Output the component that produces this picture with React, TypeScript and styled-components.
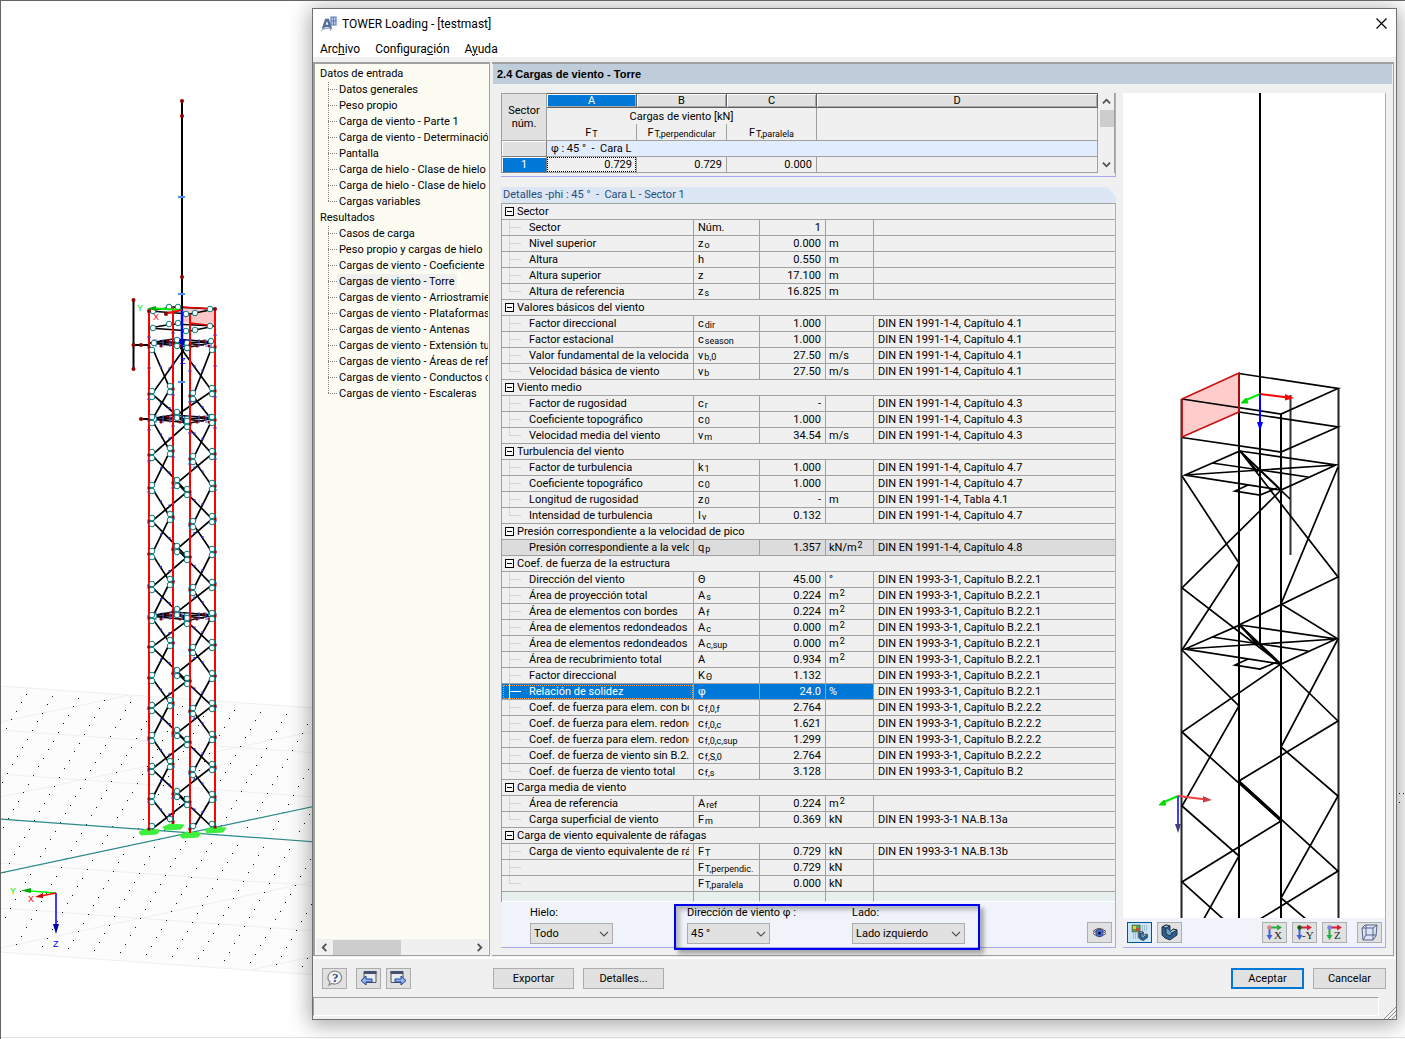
import React from "react";
import styled, { createGlobalStyle, css } from "styled-components";

const UI = `Roboto, "Noto Sans", sans-serif`;
const GRID = `Roboto, "Liberation Sans", sans-serif`;
const LINE = "#a0a0a0";
const LILAC = "#a8a8ee";
const BLUE = "#0078d7";

const GlobalStyle = createGlobalStyle`
  *, *::before, *::after { box-sizing: border-box; }
  body { margin: 0; background: #fff; font: 11px/16px ${UI}; color: #000; }
  button, select { font: inherit; color: inherit; margin: 0; }
`;

/* ---------- desktop and window frame ---------- */

const Desktop = styled.div`
  position: relative;
  min-height: 100vh;
  padding: 8px 8px 19px 312px;
  overflow: hidden;
  border-top: 1px solid #666;
  border-left: 1px solid #666;
`;

const Scene = styled.svg`
  position: absolute;
  left: -1px;
  top: -1px;
`;

const AppWindow = styled.main`
  position: relative;
  display: flex;
  flex-direction: column;
  margin: -1px 0 0 -1px;
  background: #f0f0f0;
  border: 1px solid #707070;
  box-shadow: 0 3px 20px 2px rgba(0, 0, 0, 0.35);
`;

const TitleBar = styled.header`
  display: flex;
  align-items: center;
  gap: 5px;
  height: 29px;
  padding: 0 8px;
  background: #fff;
`;

const Title = styled.h1`
  flex: 1;
  margin: 0;
  font: 12px/16px ${UI};
`;

const CloseButton = styled.button`
  display: flex;
  padding: 0;
  border: 0;
  background: none;
`;

const MenuBar = styled.nav`
  display: flex;
  gap: 15px;
  height: 19px;
  padding: 2px 7px 0;
  background: #fff;
  font-size: 12px;
`;

const MenuItem = styled.button`
  padding: 0;
  border: 0;
  background: none;
  line-height: 16px;
`;

const Body = styled.div`
  display: grid;
  grid-template-columns: 177px minmax(0, 1fr);
  gap: 2px;
  margin-top: 5px;
`;

/* ---------- navigator ---------- */

const Navigator = styled.nav`
  display: flex;
  flex-direction: column;
  min-width: 0;
  padding: 2px 1px 0 1px;
  background: #fcfcf3;
  border: solid ${LINE};
  border-width: 2px 1px 1px 2px;
  font-size: 11px;
`;

const TreeList = styled.ul`
  flex: 1;
  margin: 0;
  padding: 0;
  list-style: none;
  overflow: hidden;
  white-space: nowrap;
`;

const TreeSection = styled.li`
  padding-left: 4px;
  ul { flex: none; overflow: visible; padding-left: 8px; }
`;

const TreeItem = styled.li<{ $last?: boolean; $active?: boolean }>`
  display: flex;
  align-items: center;
  height: 16px;
  &::before {
    content: "";
    flex: none;
    align-self: flex-start;
    width: 9px;
    height: ${(p) => (p.$last ? 8 : 16)}px;
    background:
      repeating-linear-gradient(to bottom, #808080 0 1px, transparent 1px 2px) left / 1px 100% no-repeat,
      repeating-linear-gradient(to right, #808080 0 1px, transparent 1px 2px) 0 7px / 9px 1px no-repeat;
  }
  a {
    padding: 0 2px;
    color: inherit;
    text-decoration: none;
    line-height: 16px;
    background: ${(p) => (p.$active ? "#f0f0f0" : "none")};
  }
`;

const HScroll = styled.div`
  display: flex;
  align-items: center;
  height: 16px;
  background: #f0f0f0;
  padding: 0 4px;
`;

const HThumb = styled.div`
  width: 68px;
  height: 15px;
  margin: 0 auto 0 4px;
  background: #cdcdcd;
`;

/* ---------- content ---------- */

const Panel = styled.section`
  display: flex;
  flex-direction: column;
  min-width: 0;
  border: solid ${LINE};
  border-width: 2px 1px 1px 0;
  margin-right: 2px;
  padding-left: 1px;
`;

const PanelTitle = styled.h2`
  margin: 0 1px 0 0;
  padding: 0 4px;
  height: 20px;
  background: #bfccd9;
  font: bold 11px/20px "Liberation Sans", sans-serif;
`;

const Columns = styled.div`
  display: grid;
  grid-template-columns: minmax(0, 1fr) 263px;
  gap: 7px;
  padding: 9px 7px 7px 8px;
`;

const Left = styled.div`
  display: flex;
  flex-direction: column;
  min-width: 0;
  gap: 10px;
`;

const LoadsBox = styled.div`
  display: flex;
  gap: 1px;
  padding-bottom: 3px;
  border: solid ${LILAC};
  border-width: 0 1px 1px 0;
`;

const LoadsTable = styled.table`
  flex: 1;
  table-layout: fixed;
  border-collapse: separate;
  border-spacing: 0;
  border-left: 1px solid ${LINE};
  font: 11px/15px ${GRID};
  th, td { padding: 0; font-weight: normal; overflow: hidden; white-space: nowrap; }
`;

const Letter = styled.th<{ $active?: boolean }>`
  height: 15px;
  line-height: 12px;
  border: solid #606060;
  border-width: 1px 1px 1px 0;
  background: ${(p) => (p.$active ? BLUE : "#e1e1e1")};
  color: ${(p) => (p.$active ? "#fff" : "#000")};
  box-shadow: inset 1px 1px #fff, inset -1px -1px #a8a8a8;
`;

const Corner = styled.th`
  background: #e1e1e1;
  line-height: 13px;
  border: solid ${LINE};
  border-width: 1px 1px 1px 0;
`;

const HeadCell = styled.th<{ $top?: boolean }>`
  height: ${(p) => (p.$top ? 16 : 17)}px;
  border-right: 1px solid ${LINE};
  border-bottom: ${(p) => (p.$top ? "0" : `1px solid ${LINE}`)};
`;

const RowHead = styled.th<{ $active?: boolean }>`
  height: 16px;
  background: ${(p) => (p.$active ? BLUE : "#e1e1e1")};
  color: #fff;
  box-shadow: inset 1px 1px #fff;
  border: solid #808080;
  border-width: 0 1px 1px 0;
`;

const DirectionCell = styled.td`
  height: 16px;
  background: #e1edff;
  text-indent: 4px;
  border: solid ${LINE};
  border-width: 0 1px 1px 0;
`;

const LoadCell = styled.td<{ $focus?: boolean }>`
  height: 16px;
  text-align: right;
  border: solid ${LINE};
  border-width: 0 1px 1px 0;
  span { display: block; padding-right: 4px; line-height: 15px; }
  ${(p) => p.$focus && css`span { padding-right: 3px; line-height: 13px; border: 1px dotted #000; }`}
`;

const VScroll = styled.div`
  display: flex;
  flex-direction: column;
  align-items: center;
  width: 16px;
  padding: 4px 0;
  border-right: 1px solid ${LINE};
`;

const VThumb = styled.div`
  width: 14px;
  height: 17px;
  margin: 4px 0 auto;
  background: #cdcdcd;
`;

const DetailsTitle = styled.h3`
  margin: 0;
  height: 16px;
  padding-left: 2px;
  background: #dce6f4;
  clip-path: polygon(0 0, calc(100% - 8px) 0, 100% 10px, 100% 100%, 0 100%);
  color: #1f4e79;
  font: 11px/16px ${GRID};
  white-space: pre;
`;

const DetailsFrame = styled.div`
  border-right: 1px solid ${LILAC};
`;

const DetailsTable = styled.table`
  width: 100%;
  table-layout: fixed;
  border-collapse: separate;
  border-spacing: 0;
  border: solid ${LINE};
  border-width: 1px 0 0 1px;
  font: 11px/15px ${GRID};
`;

const Cell = styled.td<{ $align?: string; $tone?: string }>`
  height: 16px;
  padding: 0 4px;
  overflow: hidden;
  white-space: nowrap;
  text-align: ${(p) => p.$align ?? "left"};
  border: solid ${LINE};
  border-width: 0 1px 1px 0;
  &:nth-child(4) { padding-left: 3px; }
  &:last-child { border-right: 0; }
  ${(p) => p.$tone === "selected" && css`&:not(:last-child) { background: ${BLUE}; color: #fff; }`}
  ${(p) => p.$tone === "marked" && css`background: #dcdcdc;`}
`;

const NameCell = styled(Cell)`
  padding-left: 0;
  ${(p) => p.$tone === "selected" && css`outline: 1px dotted #f0a050; outline-offset: -2px;`}
`;

const Name = styled.div`
  display: flex;
  height: 15px;
  padding-left: 7px;
  overflow: hidden;
`;

const Branch = styled.i<{ $last?: boolean; $hidden?: boolean; $tone?: string }>`
  flex: none;
  width: 12px;
  margin-right: 8px;
  --c: ${(p) => (p.$tone === "selected" ? "#fff" : "#d4d4d4")};
  background:
    linear-gradient(var(--c), var(--c)) 0 0 / 1px ${(p) => (p.$last ? "8px" : "100%")} no-repeat,
    linear-gradient(var(--c), var(--c)) 0 7px / 100% 1px no-repeat;
  visibility: ${(p) => (p.$hidden ? "hidden" : "visible")};
`;

const GroupCell = styled.th`
  height: 16px;
  padding: 0 0 0 3px;
  border-bottom: 1px solid ${LINE};
  font-weight: normal;
  text-align: left;
  div { display: flex; align-items: center; gap: 3px; height: 15px; }
`;

const Toggle = styled.button`
  width: 9px;
  height: 9px;
  padding: 0;
  border: 1px solid #000;
  border-radius: 0;
  background: linear-gradient(#000, #000) center / 5px 1px no-repeat #fff;
`;

const EmptyCell = styled(Cell)`
  height: 10px;
  border-bottom-color: #fff;
  background: #e8efef;
`;

const Sub = styled.sub`
  margin-left: 1px;
  font-size: 9px;
  line-height: 0;
  vertical-align: -1px;
`;

const Sup = styled.sup`
  margin-left: 1px;
  font-size: 9px;
  line-height: 0;
  vertical-align: 3px;
`;

const FilterBar = styled.div`
  display: flex;
  align-items: flex-start;
  height: 46px;
  padding: 3px 3px 0 29px;
  background: #f0f4fa;
  border-bottom: 1px solid ${LILAC};
`;

const Field = styled.div<{ $width: number }>`
  display: flex;
  flex-direction: column;
  gap: 2px;
  width: ${(p) => p.$width}px;
  white-space: nowrap;
  label { line-height: 16px; }
`;

const SelectBox = styled.div`
  display: grid;
  align-items: center;
  > * { grid-area: 1 / 1; }
  svg { justify-self: end; margin-right: 4px; pointer-events: none; }
`;

const Select = styled.select`
  appearance: none;
  width: 100%;
  height: 21px;
  padding: 0 3px;
  border: 1px solid #adadad;
  border-radius: 0;
  background: #e1e1e1;
`;

const WindGroup = styled.div`
  position: relative;
  display: flex;
  gap: 82px;
  margin-left: 74px;
`;

const Highlight = styled.div`
  position: absolute;
  inset: -1px -15px -6px -13px;
  border: 2px solid #0000f0;
  box-shadow: 4px 4px 4px rgba(0, 0, 0, 0.3), inset 4px 4px 4px rgba(0, 0, 0, 0.25);
  pointer-events: none;
`;

const IconButton = styled.button<{ $active?: boolean }>`
  display: flex;
  flex: none;
  align-items: center;
  justify-content: center;
  width: 25px;
  height: 21px;
  padding: 0;
  border: 1px solid ${(p) => (p.$active ? "#005499" : "#adadad")};
  background: ${(p) => (p.$active ? "#cce4f7" : "#e1e1e1")};
`;

const LoweredButton = styled(IconButton)`
  margin-top: 17px;
`;

const ViewGroup = styled.div`
  display: flex;
  gap: 5px;
  margin-right: 5px;
`;

const Spacer = styled.div`
  flex: 1;
`;

/* ---------- preview ---------- */

const Preview = styled.div`
  display: flex;
  flex-direction: column;
  border-right: 1px solid ${LILAC};
`;

const PreviewCanvas = styled.div`
  flex: 1;
  min-height: 0;
  background: #fff;
  svg { display: block; width: 100%; height: 100%; }
`;

const PreviewBar = styled.div`
  display: flex;
  gap: 5px;
  height: 30px;
  padding: 4px 3px 0 4px;
  background: #f0f4fa;
  border-bottom: 1px solid ${LILAC};
`;

/* ---------- footer ---------- */

const Footer = styled.footer`
  display: flex;
  gap: 9px;
  height: 40px;
  padding: 9px 10px 0 9px;
  border-top: 2px solid #fff;
  margin-top: 1px;
`;

const IconGroup = styled.div`
  display: flex;
  gap: 5px;
  margin-right: 73px;
`;

const PushButton = styled.button<{ $wide?: boolean; $primary?: boolean }>`
  width: ${(p) => (p.$wide ? 81 : 73)}px;
  height: 21px;
  padding: 0;
  border: ${(p) => (p.$primary ? `2px solid ${BLUE}` : "1px solid #adadad")};
  background: #e1e1e1;
`;

const StatusBar = styled.div`
  display: flex;
  align-items: flex-end;
  justify-content: space-between;
  height: 22px;
`;

const StatusField = styled.div`
  flex: 1;
  align-self: flex-start;
  height: 19px;
  margin-right: 5px;
  border: solid;
  border-color: ${LINE} #fff #fff ${LINE};
  border-width: 1px;
`;

/* ---------- data ---------- */

const tree = [
  { label: "Datos de entrada", items: ["Datos generales", "Peso propio", "Carga de viento - Parte 1", "Carga de viento - Determinación", "Pantalla", "Carga de hielo - Clase de hielo G", "Carga de hielo - Clase de hielo R", "Cargas variables"] },
  { label: "Resultados", items: ["Casos de carga", "Peso propio y cargas de hielo", "Cargas de viento - Coeficiente", "Cargas de viento - Torre", "Cargas de viento - Arriostramiento", "Cargas de viento - Plataformas", "Cargas de viento - Antenas", "Cargas de viento - Extensión tubular", "Cargas de viento - Áreas de referencia", "Cargas de viento - Conductos de", "Cargas de viento - Escaleras"] },
];

/* name, symbol (base_sub), value, unit (base^sup), reference, tone */
type Row = [string, string, string, string, string, string?];

const C = "DIN EN 1991-1-4, Capítulo ";
const B = "DIN EN 1993-3-1, Capítulo B.2";

const groups: { title: string; rows: Row[] }[] = [
  { title: "Sector", rows: [
    ["Sector", "Núm.", "1", "", ""],
    ["Nivel superior", "z_o", "0.000", "m", ""],
    ["Altura", "h", "0.550", "m", ""],
    ["Altura superior", "z", "17.100", "m", ""],
    ["Altura de referencia", "z_s", "16.825", "m", ""],
  ] },
  { title: "Valores básicos del viento", rows: [
    ["Factor direccional", "c_dir", "1.000", "", C + "4.1"],
    ["Factor estacional", "c_season", "1.000", "", C + "4.1"],
    ["Valor fundamental de la velocidad", "v_b,0", "27.50", "m/s", C + "4.1"],
    ["Velocidad básica de viento", "v_b", "27.50", "m/s", C + "4.1"],
  ] },
  { title: "Viento medio", rows: [
    ["Factor de rugosidad", "c_r", "-", "", C + "4.3"],
    ["Coeficiente topográfico", "c_0", "1.000", "", C + "4.3"],
    ["Velocidad media del viento", "v_m", "34.54", "m/s", C + "4.3"],
  ] },
  { title: "Turbulencia del viento", rows: [
    ["Factor de turbulencia", "k_1", "1.000", "", C + "4.7"],
    ["Coeficiente topográfico", "c_0", "1.000", "", C + "4.7"],
    ["Longitud de rugosidad", "z_0", "-", "m", "DIN EN 1991-1-4, Tabla 4.1"],
    ["Intensidad de turbulencia", "I_v", "0.132", "", C + "4.7"],
  ] },
  { title: "Presión correspondiente a la velocidad de pico", rows: [
    ["Presión correspondiente a la velocidad", "q_p", "1.357", "kN/m^2", C + "4.8", "marked"],
  ] },
  { title: "Coef. de fuerza de la estructura", rows: [
    ["Dirección del viento", "Θ", "45.00", "°", B + ".2.1"],
    ["Área de proyección total", "A_s", "0.224", "m^2", B + ".2.1"],
    ["Área de elementos con bordes", "A_f", "0.224", "m^2", B + ".2.1"],
    ["Área de elementos redondeados con", "A_c", "0.000", "m^2", B + ".2.1"],
    ["Área de elementos redondeados con", "A_c,sup", "0.000", "m^2", B + ".2.1"],
    ["Área de recubrimiento total", "A", "0.934", "m^2", B + ".2.1"],
    ["Factor direccional", "K_Θ", "1.132", "", B + ".2.1"],
    ["Relación de solidez", "φ", "24.0", "%", B + ".2.1", "selected"],
    ["Coef. de fuerza para elem. con bordes", "c_f,0,f", "2.764", "", B + ".2.2"],
    ["Coef. de fuerza para elem. redondeados", "c_f,0,c", "1.621", "", B + ".2.2"],
    ["Coef. de fuerza para elem. redondeados", "c_f,0,c,sup", "1.299", "", B + ".2.2"],
    ["Coef. de fuerza de viento sin B.2.2.2", "c_f,S,0", "2.764", "", B + ".2.2"],
    ["Coef. de fuerza de viento total", "c_f,s", "3.128", "", B],
  ] },
  { title: "Carga media de viento", rows: [
    ["Área de referencia", "A_ref", "0.224", "m^2", ""],
    ["Carga superficial de viento", "F_m", "0.369", "kN", "DIN EN 1993-3-1 NA.B.13a"],
  ] },
  { title: "Carga de viento equivalente de ráfagas", rows: [
    ["Carga de viento equivalente de ráfagas", "F_T", "0.729", "kN", "DIN EN 1993-3-1 NA.B.13b"],
    ["", "F_T,perpendic.", "0.729", "kN", ""],
    ["", "F_T,paralela", "0.000", "kN", ""],
  ] },
];

const Symbol = ({ text }: { text: string }) => {
  const [base, sub] = text.split("_");
  return <>{base}{sub && <Sub>{sub}</Sub>}</>;
};

const Unit = ({ text }: { text: string }) => {
  const [base, sup] = text.split("^");
  return <>{base}{sup && <Sup>{sup}</Sup>}</>;
};

/* ---------- small drawings ---------- */

const Chevron = ({ dir, size = 9, bold }: { dir: "up" | "down" | "left" | "right"; size?: number; bold?: boolean }) => {
  const d = { up: "M1 7 5 3 9 7", down: "M1 3 5 7 9 3", left: "M7 1 3 5 7 9", right: "M3 1 7 5 3 9" }[dir];
  return (
    <svg width={size} height={size} viewBox="0 0 10 10" fill="none" stroke="#505050" strokeWidth={bold ? 2 : 1.1}>
      <path d={d} />
    </svg>
  );
};

const AppIcon = () => (
  <svg width="16" height="16" viewBox="0 0 16 16" fill="none">
    <path d="M2 13 5 4h2l3 9M4 10h4" stroke="#54699c" strokeWidth="2.400" />
    <path d="M0 15l4-4M1 13l9-1M9 15l2-3" stroke="#8fa0c8" />
    <path d="M10 1h5v8h-5zM10 5h5M12.500 1v8" stroke="#5b7ab8" strokeWidth="1.200" fill="#c9d6ef" />
  </svg>
);

const EyeIcon = () => (
  <svg width="15" height="12" viewBox="0 0 15 12">
    <path d="M1 6.500Q7-.5 14 6.500 7 12 1 6.500Z" fill="#fff" stroke="#555" />
    <circle cx="7.500" cy="6" r="3.800" fill="#4a6fd0" stroke="#27408b" strokeWidth=".8" />
    <circle cx="7.500" cy="6" r="1.500" fill="#101030" />
    <path d="M1 4.500Q7-1.500 14 4.500" fill="none" stroke="#444" />
  </svg>
);

const SolidPart = ({ x = 0, y = 0, k = 1 }: { x?: number; y?: number; k?: number }) => (
  <g transform={`translate(${x} ${y}) scale(${k})`} stroke="#1c2733" strokeWidth=".9" strokeLinejoin="round">
    <path d="M1 3 5 1l4 1v6l3-3 4 1v5l-7 5-5-2-3-3Z" fill="#2f5f92" />
    <path d="M1 3l4-2 4 1-4 2ZM9 8l3-3 4 1-5 3Z" fill="#9cc6e6" />
    <path d="M5 4v6l4 2 2-3" fill="#6f9fcb" />
  </g>
);

const MixedIcon = () => (
  <svg width="17" height="17" viewBox="0 0 17 17">
    <path d="M9 2h7M9 4h7M9 6h7M2 10h6M2 12h6M2 14h6" stroke="#7b95ad" strokeDasharray="1 1" />
    <path d="M1 1h8v7H1z" fill="#5c9e50" stroke="#3b5c4a" strokeWidth=".6" />
    <path d="M2 2h3v3H2z" fill="#e8d030" />
    <path d="M5 4h3v3H5z" fill="#c05030" />
    <SolidPart x={7} y={7} k={0.6} />
  </svg>
);

const PartIcon = () => (
  <svg width="17" height="17" viewBox="0 0 17 17"><SolidPart /></svg>
);

const AxisIcon = ({ label, across, down, knob }: { label: string; across: string; down: string; knob: string }) => (
  <svg width="18" height="17" viewBox="0 0 18 17">
    <path d="M3 3.500h9" stroke={across} strokeWidth="2" />
    <path d="M11 .5l5 3-5 3Z" fill={across} />
    <path d="M3.500 3v9" stroke={down} strokeWidth="2" />
    <path d="M.5 11h6l-3 5Z" fill={down} />
    <circle cx="3.500" cy="3.500" r="2.200" fill={knob} />
    <text x={label.length > 1 ? 6 : 8} y="15" fontFamily="Liberation Serif" fontSize="11" fill="#222">{label}</text>
  </svg>
);

const CubeIcon = () => (
  <svg width="17" height="17" viewBox="0 0 17 17" fill="none" stroke="#54648c" strokeLinejoin="round">
    <path d="M1 4 4 1h12l-1 11-3 4H2Z" fill="#dbe3f2" />
    <path d="M1 4h11v12M12 4l4-3M5 1v10h10M5 11l-3 5" />
  </svg>
);

const HelpIcon = () => (
  <svg width="18" height="17" viewBox="0 0 18 17">
    <path d="M9 1a7 6.500 0 1 1-3 12.500L3 15l1-3A7 6.500 0 0 1 9 1Z" fill="#f4f4f4" stroke="#888" strokeWidth="1.200" />
    <text x="6" y="12" fontFamily="Liberation Serif" fontWeight="bold" fontSize="13" fill="#2b4a9b">?</text>
  </svg>
);

const PageIcon = ({ back }: { back?: boolean }) => (
  <svg width="17" height="17" viewBox="0 0 17 17">
    <g transform={back ? undefined : "translate(17 0) scale(-1 1)"}>
      <path d="M4 1.500h12v11H4Z" fill="#e8ebf2" stroke="#555" />
      <path d="M4 1h12.500v3H4Z" fill="#44506e" />
      <path d="M1 10.500 6 6v3h6v3H6v3Z" fill="#8fb2f0" stroke="#1c3f94" />
    </g>
  </svg>
);

/* ---------- model view behind the window ---------- */

const LEG = { A: 149, B: 173, C: 190, D: 215 } as const;
type Leg = keyof typeof LEG;

/* each face is a zigzag: alternating legs, with the height of every joint */
const faces: { legs: [Leg, Leg]; joints: [number, number]; ys: number[] }[] = [
  { legs: ["A", "B"], joints: [152, 170], ys: [347, 389, 420, 451, 488, 517, 554, 582, 618, 643, 678, 703, 738, 764, 799, 822] },
  { legs: ["C", "A"], joints: [187, 152], ys: [345, 394, 424, 455, 492, 521, 557, 587, 621, 647, 681, 708, 742, 769, 802, 829] },
  { legs: ["B", "D"], joints: [177, 212], ys: [343, 391, 415, 454, 483, 519, 549, 585, 612, 645, 673, 706, 733, 767, 794, 827] },
  { legs: ["D", "C"], joints: [212, 193], ys: [347, 396, 420, 459, 486, 524, 552, 590, 616, 650, 676, 711, 737, 772, 797, 829] },
];

const legEnds: [Leg, number, number][] = [["A", 311, 830], ["B", 307, 824], ["C", 314, 833], ["D", 309, 828]];

const groundDots = () => {
  const dots: [number, number][] = [];
  for (let i = -30; i < 40; i++)
    for (let j = -40; j < 40; j++) {
      const x = 190 + i * 26 - j * 31;
      const y = 832 + i * 2 + j * 6.6;
      if (x > 1 && x < 330 && y > 687 + x * 0.071 && y < 952 + x * 0.075) dots.push([Math.round(x), Math.round(y)]);
    }
  return dots;
};

const Platform = ({ y }: { y: number }) => (
  <g>
    <path
      d={`M149 ${y} L173 ${y - 4} L215 ${y - 1} L190 ${y + 4}Z M149 ${y} L215 ${y - 1} M173 ${y - 4} L190 ${y + 4} M160 ${y - 2} L204 ${y + 2}`}
      stroke="#000" strokeWidth="1.700" fill="none"
    />
    {[154, 161, 168, 180, 186, 197, 204, 209].map((x, i) => (
      <g key={x}>
        <circle cx={x} cy={y + (i % 2 ? 3 : -2)} r="1.600" fill="#8b0000" />
        <path d={`M${x + 2} ${y - 4}v8`} stroke="#5a5aff" />
      </g>
    ))}
    {[[154, 0], [177, -3], [187, 0], [187, 5], [211, -2]].map(([x, d]) => (
      <circle key={`${x}${d}`} cx={x} cy={y + d} r="2.800" fill="#fff" stroke="#008080" />
    ))}
  </g>
);

const ring = (y: number) => `M149 ${y + 2} L173 ${y - 2} L215 ${y} L190 ${y + 5}Z`;

const ModelScene = () => (
  <Scene width="1405" height="1039" viewBox="0 0 1405 1039" aria-hidden="true">
    <path d="M0 686 L330 709 V976 L0 952Z" fill="#fcfcfc" />
    <g stroke="#efefef" fill="none">
      <path d="M0 686 330 709M0 730 330 754M0 774 330 798M0 863 330 887M0 908 330 932M0 952 330 976" />
      <path d="M0 722 130 695M0 797 330 728M0 948 330 878M250 970 330 953" />
    </g>
    {groundDots().map(([x, y], i) => <rect key={i} x={x} y={y} width="1" height="1" fill="#111" />)}
    <path d="M1399 793h1v1h-1zM1403 793h1v1h-1zM1399 802h1v1h-1z" fill="#111" />
    <path d="M0 819 330 843M0 873 330 803" stroke="#2a8a8a" strokeWidth="1.200" />
    {[[149, 831], [173, 826], [190, 834], [215, 829]].map(([x, y]) => (
      <path key={x} d={`M${x - 10} ${y + 1} l7 -3 14 1 -3 4 -16 1Z`} fill="#3cf03c" stroke="#3cf03c" />
    ))}
    <path d="M182 307 215 309V327L182 322Z" fill="#ffc8c8" />
    <path d={ring(309)} stroke="#000" strokeWidth="1.500" fill="none" />
    <path d={ring(326)} stroke="#000" strokeWidth="1.500" fill="none" />
    <path d="M182 307 215 309M190 323 215 326" stroke="#e00000" strokeWidth="1.500" />
    <path d="M182 101V419M133.500 300V370M133 345H149M141 419H149" stroke="#000" strokeWidth="2" />
    {faces.map(({ joints, ys }, f) => (
      <g key={f}>
        <polyline points={ys.map((y, i) => `${joints[i % 2]},${y}`).join(" ")} fill="none" stroke="#000" strokeWidth="1.700" />
        {ys.slice(1).map((y, i) => (
          <rect key={i} x={(joints[0] + joints[1]) / 2 - 1} y={(y + ys[i]) / 2 - 2} width="2" height="2" fill="#3030c0" />
        ))}
      </g>
    ))}
    <Platform y={343} />
    <Platform y={419} />
    <Platform y={616} />
    {legEnds.map(([leg, top, end]) => (
      <g key={leg}>
        <path d={`M${LEG[leg]} ${top}V${end}`} stroke="#f00" strokeWidth="2" />
        {Array.from({ length: 16 }, (_, i) => (
          <path key={i} d={`M${LEG[leg] - 2} ${top + 26 + i * 31}h4`} stroke="#4040d0" />
        ))}
      </g>
    ))}
    {faces.map(({ legs, joints, ys }, f) => ys.map((y, i) => (
      <g key={`${f}-${i}`}>
        <rect x={LEG[legs[i % 2]] - 1.5} y={y - 1.5} width="3" height="3" fill="#a00000" />
        {i > 0 && <circle cx={joints[i % 2]} cy={y - 3} r="2.800" fill="#fff" stroke="#008080" />}
        {i < ys.length - 1 && <circle cx={joints[i % 2]} cy={y + 3} r="2.800" fill="#fff" stroke="#008080" />}
      </g>
    )))}
    {[[153, 311], [169, 307], [178, 307], [186, 314], [195, 313], [210, 309], [153, 328], [169, 324], [178, 323], [186, 331], [195, 330], [210, 326]].map(([x, y]) => (
      <circle key={`${x},${y}`} cx={x} cy={y} r="2.800" fill="#fff" stroke="#008080" />
    ))}
    {[[182, 101], [182, 116], [182, 277], [133.5, 300], [133.5, 345], [133.5, 369], [149, 311], [215, 309], [141, 345], [141, 419], [166, 314]].map(([x, y]) => (
      <circle key={`${x},${y}`} cx={x} cy={y} r="2" fill="#900000" />
    ))}
    <path d="M178 197h7M178 294h7M178 382h7" stroke="#4a90f0" strokeWidth="2" />
    <path d="M182 310 156 308.500" stroke="#0e0" strokeWidth="2" />
    <path d="M147 308.500l9-2.500v5Z" fill="#0a0" />
    <path d="M182 310 168 313" stroke="#f00" strokeWidth="2" />
    <path d="M182 310V340" stroke="#00f" strokeWidth="2.500" />
    <path d="M179 340h6l-3 9Z" fill="#00c" />
    <path d="M56 893 30 891" stroke="#0e0" strokeWidth="1.500" />
    <path d="M21 890.500l10-2.500v5Z" fill="#0a0" />
    <path d="M56 893 41 896" stroke="#f00" strokeWidth="1.500" />
    <path d="M35 897l8-4v5Z" fill="#c00" />
    <path d="M56 893V925" stroke="#00f" strokeWidth="1.500" />
    <path d="M53 924h6l-3 10Z" fill="#00a" />
    <g fontFamily="Liberation Sans" fontSize="9">
      <text x="137" y="311" fill="#0e0">Y</text>
      <text x="153" y="320" fill="#f00">X</text>
      <text x="180" y="364" fill="#00f">Z</text>
      <text x="10" y="894" fill="#0e0">Y</text>
      <text x="28" y="902" fill="#e00">X</text>
      <text x="53" y="947" fill="#00f">Z</text>
    </g>
    <path d="M0 1037.500H1405" stroke="#e0e0e0" />
  </Scene>
);

/* ---------- tower preview ---------- */

const deck = (dy: number) =>
  `M1240 ${451 + dy} L1336 ${465 + dy} L1281 ${490 + dy} L1185 ${475 + dy}Z M1185 ${475 + dy} L1336 ${465 + dy}` +
  `M1212 ${463 + dy} L1308 ${477 + dy} M1240 ${451 + dy} L1281 ${490 + dy} M1242 ${453 + dy} L1258 ${472 + dy}` +
  `M1248 ${485 + dy} L1235 ${491 + dy} L1260 ${495 + dy} L1277 ${488 + dy}`;

const Triad = ({ x, y, soft }: { x: number; y: number; soft?: boolean }) => (
  <g transform={`translate(${x} ${y})`}>
    <path d="M0 0 26 3.200" stroke={soft ? "#f04040" : "#f00"} strokeWidth="2" />
    <path d="M25 0l9 4-9 2.500Z" fill={soft ? "#c84040" : "#f00"} />
    <path d="M0 0-14 6" stroke="#0e0" strokeWidth="2" />
    <path d="M-19 9l5-5 2 5Z" fill="#0d0" stroke="#0d0" />
    <path d="M0 0V29" stroke={soft ? "#4040f0" : "#00f"} strokeWidth="2" />
    <path d="M-3 28h6L0 37Z" fill={soft ? "#404080" : "#00f"} />
  </g>
);

const TowerPreview = () => (
  <svg viewBox="1123 93 262 825" preserveAspectRatio="xMidYMid slice" role="img" aria-label="Torre">
    <path d="M1182 399 1239 373V412L1182 437Z" fill="#fcc" />
    <g stroke="#000" strokeWidth="1.700" fill="none">
      <path d="M1260 93V644M1239 373V920M1281 414V920" strokeWidth="2" />
      <path d="M1181.500 399V920M1338.500 388V920" stroke="#222" strokeWidth="2" />
      <path d="M1290.500 395V555" stroke="#333" strokeWidth="2" />
      <path d="M1239 373.500 1338 388.500 1281 414 1182 399" />
      <path d="M1239 412 1338 427 1281 452 1182 437.500" />
      <path d={deck(0)} />
      <path d="M1240 451 1290 499" />
      <path d={deck(174)} />
      <path d="M1182 476 1239 563 1182 650 1239 706 1182 806 1239 856 1182 958" />
      <path d="M1281 490 1182 588 1281 664 1182 732 1281 821 1182 882 1281 971" />
      <path d="M1240 451 1338 577 1239 625 1338 721 1239 781 1338 871 1239 932" />
      <path d="M1338 467 1281 604 1338 639 1281 747 1338 796 1281 898 1338 946" />
      <path d="M1239 782 1281 820" strokeWidth="3" />
    </g>
    <path d="M1182 437V399L1239 373V412Z" fill="none" stroke="#c81010" strokeWidth="1.700" />
    <Triad x={1260} y={394} />
    <Triad x={1178} y={796} soft />
  </svg>
);

/* ---------- parts of the page ---------- */

const Combo = ({ id, label, value, width }: { id: string; label: string; value: string; width: number }) => (
  <Field $width={width}>
    <label htmlFor={id}>{label}</label>
    <SelectBox>
      <Select id={id} defaultValue={value}><option>{value}</option></Select>
      <Chevron dir="down" size={10} />
    </SelectBox>
  </Field>
);

const Loads = () => (
  <LoadsBox>
    <LoadsTable>
      <colgroup>
        <col style={{ width: 45 }} /><col style={{ width: 90 }} /><col style={{ width: 90 }} /><col style={{ width: 90 }} /><col />
      </colgroup>
      <thead>
        <tr>
          <Corner rowSpan={3}>Sector<br />núm.</Corner>
          <Letter $active>A</Letter><Letter>B</Letter><Letter>C</Letter><Letter>D</Letter>
        </tr>
        <tr>
          <HeadCell colSpan={3} $top>Cargas de viento [kN]</HeadCell>
          <HeadCell rowSpan={2} />
        </tr>
        <tr>
          <HeadCell>F<Sub>T</Sub></HeadCell>
          <HeadCell>F<Sub>T,perpendicular</Sub></HeadCell>
          <HeadCell>F<Sub>T,paralela</Sub></HeadCell>
        </tr>
      </thead>
      <tbody>
        <tr><RowHead /><DirectionCell colSpan={4}>φ : 45 °&nbsp; -&nbsp; Cara L</DirectionCell></tr>
        <tr>
          <RowHead $active>1</RowHead>
          <LoadCell $focus><span>0.729</span></LoadCell>
          <LoadCell><span>0.729</span></LoadCell>
          <LoadCell><span>0.000</span></LoadCell>
          <LoadCell />
        </tr>
      </tbody>
    </LoadsTable>
    <VScroll><Chevron dir="up" bold /><VThumb /><Chevron dir="down" bold /></VScroll>
  </LoadsBox>
);

const Details = () => (
  <div>
    <DetailsTitle>Detalles -phi : 45 °  -  Cara L - Sector 1</DetailsTitle>
    <DetailsFrame>
      <DetailsTable>
        <colgroup>
          <col style={{ width: 192 }} /><col style={{ width: 66 }} /><col style={{ width: 66 }} /><col style={{ width: 48 }} /><col />
        </colgroup>
        {groups.map((g) => (
          <tbody key={g.title}>
            <tr>
              <GroupCell colSpan={5}><div><Toggle aria-label={`Contraer ${g.title}`} />{g.title}</div></GroupCell>
            </tr>
            {g.rows.map(([name, symbol, value, unit, ref, tone], i) => (
              <tr key={i}>
                <NameCell $tone={tone}>
                  <Name><Branch $tone={tone} $hidden={tone === "marked"} $last={i === g.rows.length - 1} />{name}</Name>
                </NameCell>
                <Cell $tone={tone}><Symbol text={symbol} /></Cell>
                <Cell $tone={tone} $align="right">{value}</Cell>
                <Cell $tone={tone}><Unit text={unit} /></Cell>
                <Cell $tone={tone}>{ref}</Cell>
              </tr>
            ))}
          </tbody>
        ))}
        <tbody><tr>{[0, 1, 2, 3, 4].map((i) => <EmptyCell key={i} />)}</tr></tbody>
      </DetailsTable>
      <FilterBar>
        <Combo id="ice" label="Hielo:" value="Todo" width={83} />
        <WindGroup>
          <Combo id="direction" label="Dirección de viento φ :" value="45 °" width={83} />
          <Combo id="side" label="Lado:" value="Lado izquierdo" width={113} />
          <Highlight />
        </WindGroup>
        <Spacer />
        <LoweredButton aria-label="Vista"><EyeIcon /></LoweredButton>
      </FilterBar>
    </DetailsFrame>
  </div>
);

export default function App() {
  return (
    <Desktop>
      <GlobalStyle />
      <ModelScene />
      <AppWindow>
        <TitleBar>
          <AppIcon />
          <Title>TOWER Loading - [testmast]</Title>
          <CloseButton aria-label="Cerrar">
            <svg width="13" height="13" viewBox="0 0 13 13"><path d="M1.500 1.500l10 10M11.500 1.500l-10 10" stroke="#000" strokeWidth="1.200" /></svg>
          </CloseButton>
        </TitleBar>
        <MenuBar>
          <MenuItem>Arc<u>h</u>ivo</MenuItem>
          <MenuItem>Configura<u>c</u>ión</MenuItem>
          <MenuItem>A<u>y</u>uda</MenuItem>
        </MenuBar>
        <Body>
          <Navigator>
            <TreeList>
              {tree.map((s) => (
                <TreeSection key={s.label}>
                  {s.label}
                  <TreeList>
                    {s.items.map((item, i) => (
                      <TreeItem key={item} $last={i === s.items.length - 1} $active={item === "Cargas de viento - Torre"}>
                        <a href="#">{item}</a>
                      </TreeItem>
                    ))}
                  </TreeList>
                </TreeSection>
              ))}
            </TreeList>
            <HScroll><Chevron dir="left" bold /><HThumb /><Chevron dir="right" bold /></HScroll>
          </Navigator>
          <Panel>
            <PanelTitle>2.4 Cargas de viento - Torre</PanelTitle>
            <Columns>
              <Left><Loads /><Details /></Left>
              <Preview>
                <PreviewCanvas><TowerPreview /></PreviewCanvas>
                <PreviewBar>
                  <IconButton $active aria-label="Modelo"><MixedIcon /></IconButton>
                  <IconButton aria-label="Sólido"><PartIcon /></IconButton>
                  <Spacer />
                  <ViewGroup>
                    <IconButton><AxisIcon label="X" across="#20b040" down="#4060e0" knob="#e08080" /></IconButton>
                    <IconButton><AxisIcon label="-Y" across="#d82040" down="#4060e0" knob="#106010" /></IconButton>
                    <IconButton><AxisIcon label="Z" across="#d82040" down="#20b040" knob="#8080e0" /></IconButton>
                  </ViewGroup>
                  <IconButton aria-label="Isometría"><CubeIcon /></IconButton>
                </PreviewBar>
              </Preview>
            </Columns>
          </Panel>
        </Body>
        <Footer>
          <IconButton aria-label="Ayuda"><HelpIcon /></IconButton>
          <IconGroup>
            <IconButton aria-label="Anterior"><PageIcon back /></IconButton>
            <IconButton aria-label="Siguiente"><PageIcon /></IconButton>
          </IconGroup>
          <PushButton $wide>Exportar</PushButton>
          <PushButton $wide>Detalles...</PushButton>
          <Spacer />
          <PushButton $primary>Aceptar</PushButton>
          <PushButton>Cancelar</PushButton>
        </Footer>
        <StatusBar>
          <StatusField />
          <svg width="12" height="12" viewBox="0 0 12 12" stroke="#909090"><path d="M0 12 12 0M4 12l8-8M8 12l4-4" /></svg>
        </StatusBar>
      </AppWindow>
    </Desktop>
  );
}
